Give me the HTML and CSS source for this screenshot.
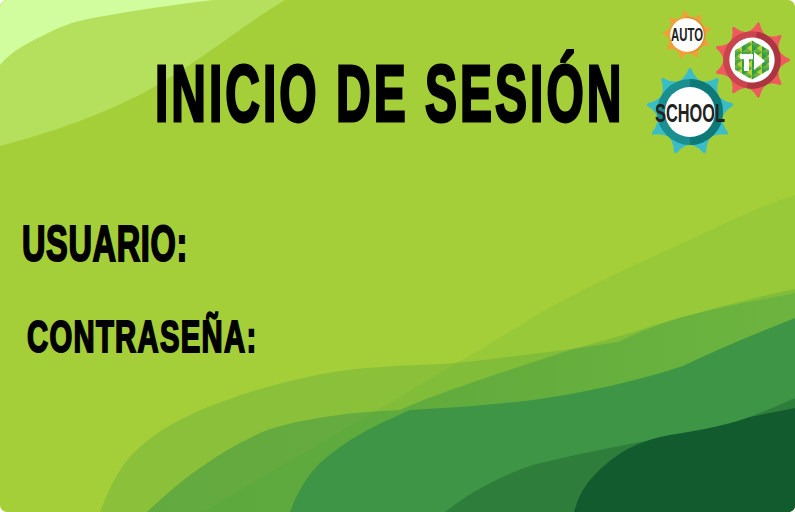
FILE: index.html
```html
<!DOCTYPE html>
<html lang="es">
<head>
<meta charset="utf-8">
<title>Inicio de sesión</title>
<link rel="stylesheet" href="styles.css">
</head>
<body>
<main class="card">
  <svg class="waves" viewBox="0 0 795 512" aria-hidden="true">
    <defs>
      <linearGradient id="cfill" x1="147" y1="0" x2="795" y2="0" gradientUnits="userSpaceOnUse">
        <stop offset="0" stop-color="#62a93f"/>
        <stop offset=".4" stop-color="#66ac3f"/>
        <stop offset="1" stop-color="#74b741"/>
      </linearGradient>
    </defs>
    <path class="w-light" d="M0 146C60 130 100 115 145 92C195 65 240 27 285 0H0Z"/>
    <path class="w-lightest" d="M0 65C12 50 30 42 50 32C70 22 85 19 110 15C150 8 180 4 213 0H0Z"/>
    <path class="w-b" d="M100 512C110 485 122 462 140 447C170 420 210 405 247 393C295 378 340 369 380 367C405 365 430 365 455 363C500 358 540 353 573 349C620 337 650 326 683 317C720 307 760 296 795 289V512Z"/>
    <path class="w-c" d="M147 512C180 480 220 450 267 430C305 418 350 412 400 410C440 392 510 370 573 349L618 342C640 332 660 323 683 317C720 307 760 300 795 293V512Z" fill="url(#cfill)"/>
    <path class="w-a" d="M203 512L400 397C440 372 490 345 533 317C580 290 640 262 683 243C720 226 760 206 795 195V512Z"/>
    <path class="w-d" d="M290 512C298 490 308 475 320 463C345 440 375 425 410 410C450 408 490 405 533 400C585 393 640 380 683 366C720 348 760 332 795 318V512Z"/>
    <path class="w-e" d="M445 512C470 492 500 476 533 465C580 453 625 445 667 437C695 431 720 427 750 417C765 411 780 405 795 398V512Z"/>
    <path class="w-f" d="M574 512C580 490 590 478 605 465C622 450 640 442 660 437C690 431 720 428 750 417L795 408V512Z"/>
  </svg>

  <h1 class="title">INICIO DE SESIÓN</h1>

  <form class="fields">
    <label class="label label-user">USUARIO:</label>
    <label class="label label-pass">CONTRASEÑA:</label>
  </form>

  <svg class="gears" viewBox="0 0 155 160" aria-hidden="true">
    <defs>
      <path id="tooth" d="M-18 -27Q-5 -32 -1.500 -43L0 -44L1.500 -43Q5 -32 18 -27L0 0Z"/>
      <g id="teeth9">
        <use href="#tooth"/>
        <use href="#tooth" transform="rotate(40)"/>
        <use href="#tooth" transform="rotate(80)"/>
        <use href="#tooth" transform="rotate(120)"/>
        <use href="#tooth" transform="rotate(160)"/>
        <use href="#tooth" transform="rotate(200)"/>
        <use href="#tooth" transform="rotate(240)"/>
        <use href="#tooth" transform="rotate(280)"/>
        <use href="#tooth" transform="rotate(320)"/>
      </g>
      <clipPath id="half"><rect x="0" y="-60" width="60" height="120"/></clipPath>
      <clipPath id="hex"><polygon points="0,-19.500 17,-9.800 17,9.800 0,19.500 -17,9.800 -17,-9.800"/></clipPath>
      <pattern id="mosaic" width="10" height="8" patternUnits="userSpaceOnUse">
        <rect width="10" height="8" fill="#6cb33f"/>
        <polygon points="0,0 5,4 0,8" fill="#2f9a48"/>
        <polygon points="5,4 10,0 10,8" fill="#b7d433"/>
        <polygon points="0,0 10,0 5,4" fill="#4aa544"/>
      </pattern>
    </defs>

    <g transform="translate(47 35) scale(.56) rotate(-5)">
      <use href="#teeth9" fill="#f0a03a"/>
      <circle r="33" fill="#f0a03a"/>
      <circle r="33" fill="#e38f2c" clip-path="url(#half)"/>
      <circle r="30" fill="#fff"/>
    </g>
    <text class="gear-text gear-auto" x="47" y="41" text-anchor="middle" textLength="32" lengthAdjust="spacingAndGlyphs">AUTO</text>

    <g transform="translate(112 60) scale(.87) rotate(10)">
      <use href="#teeth9" fill="#ef5a5c"/>
      <circle r="33" fill="#c9444c"/>
      <circle r="33" fill="#ab3640" clip-path="url(#half)"/>
      <circle r="26" fill="#fff"/>
    </g>
    <g transform="translate(112 60)">
      <rect x="-20" y="-20" width="40" height="40" fill="url(#mosaic)" clip-path="url(#hex)"/>
      <path class="mark" d="M-12 -6H1V-1H-3V11H-8V-1H-12Z"/>
      <path class="mark" d="M2 -8L13 1L2 10Z"/>
    </g>

    <g transform="translate(50 112)">
      <use href="#teeth9" fill="#3bbdc8"/>
      <circle r="33" fill="#19908f"/>
      <circle r="33" fill="#0d7a78" clip-path="url(#half)"/>
      <circle r="25" fill="#fff"/>
    </g>
    <text class="gear-text gear-school" x="50" y="122" text-anchor="middle" textLength="70" lengthAdjust="spacingAndGlyphs">SCHOOL</text>
  </svg>
</main>
</body>
</html>
```
FILE: styles.css
```css
html, body {
  margin: 0;
  padding: 0;
  background: #fff;
}

.card {
  position: relative;
  width: 795px;
  height: 512px;
  overflow: hidden;
  border-radius: 7px;
  background: #a5cf39;
  color: #000;
  font-family: "Liberation Sans", sans-serif;
  font-weight: 700;
}

.waves {
  position: absolute;
  inset: 0;
  width: 795px;
  height: 512px;
}

.w-lightest { fill: #d2fd9e; }
.w-light { fill: #b5e05e; }
.w-b { fill: #8bc13a; }
.w-a { fill: #39a531; fill-opacity: .12; }
.w-d { fill: #3e9545; }
.w-e { fill: #2e7d3b; }
.w-f { fill: #115b2f; }

.title {
  position: relative;
  width: 782px;
  margin: 0 0 0 155px;
  padding-top: 51px;
  font-size: 80px;
  line-height: 86px;
  font-weight: 700;
  letter-spacing: 5px;
  white-space: nowrap;
  -webkit-text-stroke: 3px #000;
  transform: scaleX(.6);
  transform-origin: left top;
}

.fields {
  position: relative;
  display: flex;
  flex-direction: column;
  align-items: flex-start;
  gap: 41px;
  padding: 81px 0 0 22px;
}

.label {
  display: block;
  font-size: 50px;
  line-height: 52px;
  letter-spacing: 1px;
  white-space: nowrap;
  -webkit-text-stroke: 2px #000;
  transform: scaleX(.65);
  transform-origin: left top;
}

.label-pass {
  margin-left: 5px;
  font-size: 45px;
  letter-spacing: 2px;
}

.gears {
  position: absolute;
  top: 0;
  left: 640px;
  width: 155px;
  height: 160px;
}

.gear-text {
  fill: #222;
  font-family: "Liberation Sans", sans-serif;
  font-weight: 700;
}

.gear-auto { font-size: 19px; }
.gear-school { font-size: 26px; }

.mark { fill: #fff; }
```
